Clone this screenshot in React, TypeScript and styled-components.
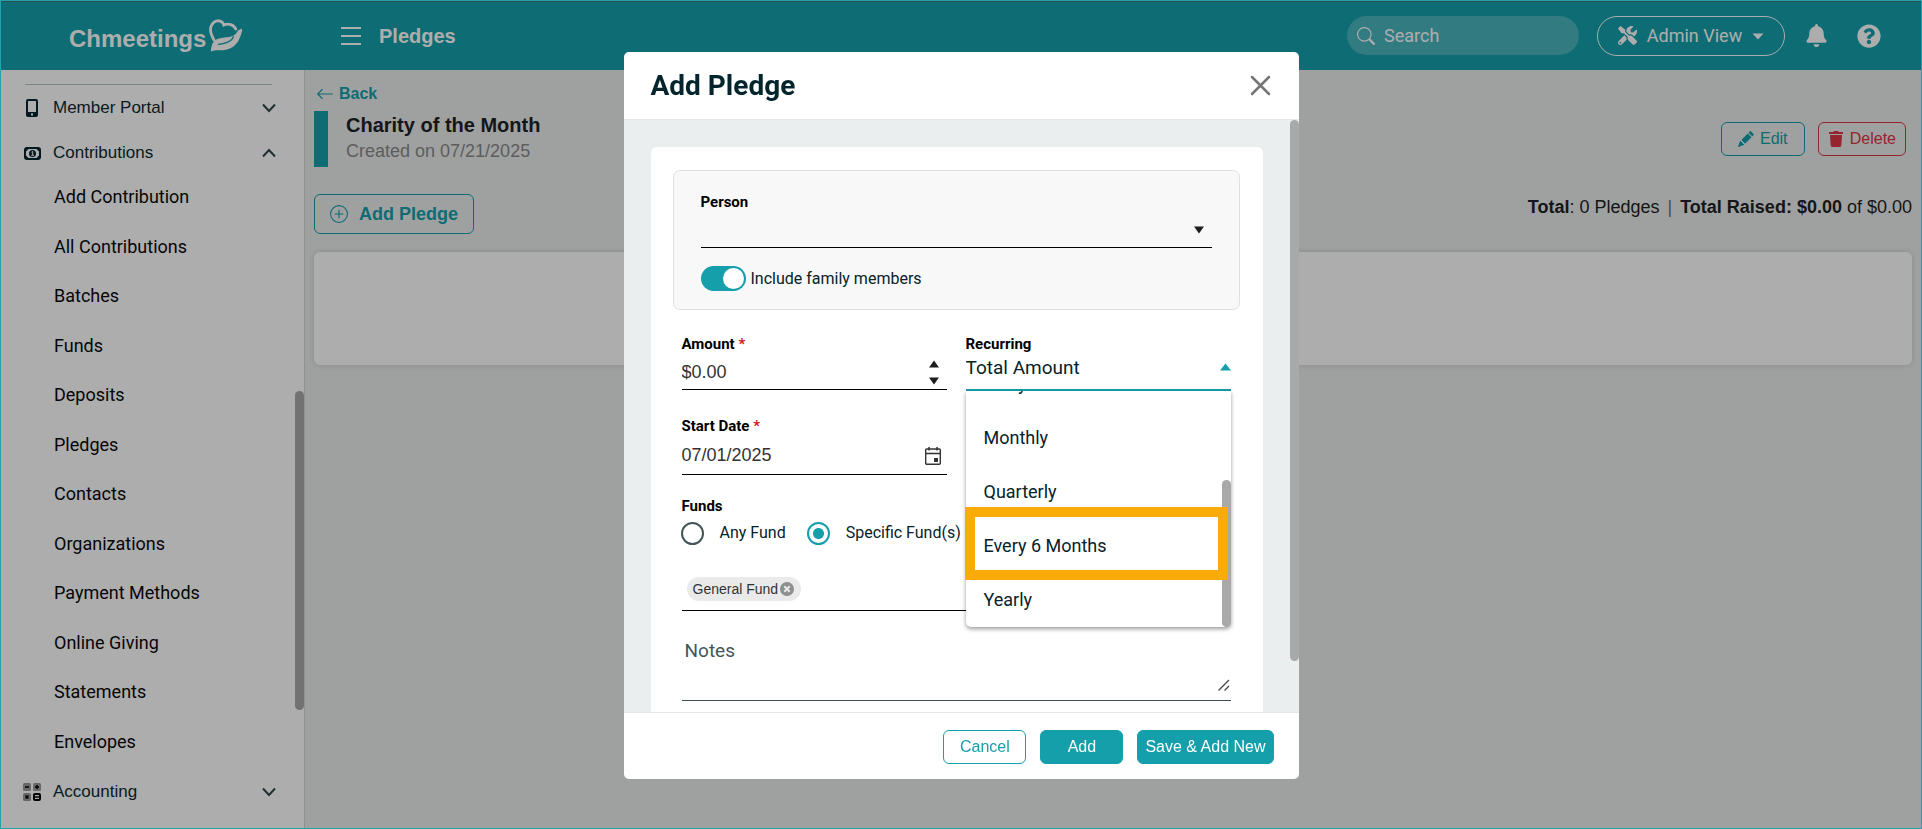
import React from "react";
import styled, { createGlobalStyle, css } from "styled-components";
import { BsArrowLeft, BsPencilFill, BsPlusCircle, BsSearch } from "react-icons/bs";
import { FaBell, FaQuestionCircle, FaTools, FaTrash } from "react-icons/fa";

const teal = "#149fab";
const ink = "#06222a";
const arial = '"Liberation Sans", Arial, sans-serif';
const roboto = 'Roboto, "Liberation Sans", sans-serif';

const GlobalStyle = createGlobalStyle`
  *, *::before, *::after { box-sizing: border-box; }
  html, body { margin: 0; height: 100%; overflow: hidden; }
  body { font-family: ${arial}; color: #1d2226; background: #ebeeed; }
  button, input, select, textarea { font: inherit; color: inherit; }
  a { color: inherit; text-decoration: none; }
`;

/* ---------- Page shell ---------- */

const Shell = styled.div`
  position: relative;
  height: 100vh;
  display: flex;
  flex-direction: column;
  padding: 1px;
`;

const Frame = styled.div`
  position: fixed;
  inset: 0;
  border: 1px solid #1fa3af;
  pointer-events: none;
`;

const TopBar = styled.header`
  flex: none;
  height: 69px;
  display: flex;
  align-items: center;
  background: ${teal};
  border-top: 1px solid #4a7377;
  color: #fff;
  padding: 0 40px 1px 0;
`;

const Brand = styled.a`
  width: 340px;
  padding-left: 68px;
  display: flex;
  align-items: center;
  gap: 3px;
  font-size: 24px;
  font-weight: 700;
  line-height: 32px;
  span { padding-top: 6px; }
`;

const IconButton = styled.button`
  display: flex;
  align-items: center;
  justify-content: center;
  padding: 0;
  border: 0;
  background: none;
  cursor: pointer;
`;

const PageName = styled.h1`
  margin: 0 auto 0 18px;
  font-size: 20px;
  line-height: 24px;
`;

const SearchBox = styled.label`
  width: 232px;
  height: 39px;
  border-radius: 20px;
  background: rgba(255, 255, 255, 0.23);
  display: flex;
  align-items: center;
  gap: 9px;
  padding: 0 10px;
  font-family: ${roboto};
  font-size: 18px;
  input {
    min-width: 0;
    flex: 1;
    border: 0;
    padding: 0;
    background: none;
    outline: none;
  }
  input::placeholder { color: #fff; opacity: 1; }
`;

const ViewButton = styled.button`
  height: 40px;
  width: 188px;
  margin: 0 20px 0 18px;
  padding: 0 0 1px;
  display: flex;
  align-items: center;
  justify-content: center;
  gap: 10px;
  border: 1px solid #fff;
  border-radius: 20px;
  background: none;
  font-family: ${roboto};
  font-size: 18px;
`;

const HelpButton = styled(IconButton)`
  margin-left: 29px;
`;

const Columns = styled.div`
  flex: 1;
  min-height: 0;
  display: flex;
`;

/* ---------- Sidebar ---------- */

const Sidebar = styled.nav`
  position: relative;
  flex: none;
  width: 304px;
  background: #fff;
  border-right: 1px solid #d3d8d9;
  overflow: hidden;
`;

const Rule = styled.hr`
  margin: 14px 32px 1px 24px;
  border: 0;
  border-top: 1px solid #b4c2c5;
`;

const Group = styled.button<{ $gap?: number }>`
  width: 100%;
  height: 44px;
  margin-top: ${(p) => p.$gap ?? 0}px;
  padding: 0 28px 0 21px;
  display: grid;
  grid-template-columns: 20px 1fr 14px;
  column-gap: 11px;
  align-items: center;
  justify-items: start;
  border: 0;
  background: none;
  color: #0a2b31;
  font-size: 17px;
  svg:first-child { justify-self: center; }
`;

const SubList = styled.ul`
  list-style: none;
  margin: -3px 0 0;
  padding: 0;
  height: 594px;
  display: grid;
  grid-auto-rows: 1fr;
`;

const SubLink = styled.a`
  height: 100%;
  padding-left: 53px;
  display: flex;
  align-items: center;
  font-family: ${roboto};
  font-size: 18px;
  color: #0a0a0a;
`;

const Thumb = styled.div<{ $top: number; $height: number }>`
  position: absolute;
  right: 0;
  top: ${(p) => p.$top}px;
  height: ${(p) => p.$height}px;
  width: 9px;
  border-radius: 5px;
  background: #a9a9a9;
`;

/* ---------- Main area ---------- */

const Main = styled.main`
  flex: 1;
  min-width: 0;
  padding: 14px 9px 0;
`;

const Back = styled.a`
  display: flex;
  width: fit-content;
  align-items: center;
  gap: 5px;
  padding-left: 2px;
  color: ${teal};
  font-size: 16px;
  font-weight: 700;
  line-height: 20px;
`;

const CampaignRow = styled.div`
  display: flex;
  margin-top: 7px;
  padding-right: 6px;
`;

const CampaignHead = styled.div`
  flex: 1;
  height: 56px;
  border-left: 14px solid ${teal};
  padding-left: 18px;
  h2 { margin: 0; font-size: 20px; line-height: 28px; }
  p { margin: 0; font-size: 18px; line-height: 24px; color: #8a8a8a; }
`;

const OutlineButton = styled.button<{ $color: string }>`
  height: 34px;
  min-width: 84px;
  padding: 0 9px;
  display: flex;
  align-items: center;
  justify-content: center;
  gap: 6px;
  border: 1px solid ${(p) => p.$color};
  border-radius: 6px;
  background: none;
  color: ${(p) => p.$color};
  font-size: 16px;
`;

const Actions = styled.div`
  display: flex;
  gap: 13px;
  padding-top: 11px;
`;

const ToolRow = styled.div`
  display: flex;
  justify-content: space-between;
  align-items: flex-start;
  margin-top: 27px;
`;

const AddPledgeButton = styled(OutlineButton)`
  height: 40px;
  width: 160px;
  gap: 11px;
  font-size: 18px;
  font-weight: 700;
`;

const Totals = styled.p`
  margin: 3px 0 0;
  font-size: 18px;
  line-height: 20px;
  span { color: #6b7072; margin: 0 8px; }
`;

const EmptyCard = styled.section`
  height: 113px;
  margin-top: 18px;
  border-radius: 6px;
  background: #fff;
  box-shadow: 0 0 6px rgba(0, 0, 0, 0.15);
`;

/* ---------- Dialog ---------- */

const Backdrop = styled.div`
  position: fixed;
  inset: 0;
  padding: 52px 16px 50px;
  display: flex;
  justify-content: center;
  background: rgba(0, 0, 0, 0.32);
`;

const Dialog = styled.section`
  width: 100%;
  max-width: 675px;
  display: flex;
  flex-direction: column;
  border-radius: 5px;
  background: #fff;
  overflow: hidden;
  font-family: ${roboto};
  color: ${ink};
`;

const DialogHead = styled.header`
  flex: none;
  height: 68px;
  padding: 0 28px 0 27px;
  display: flex;
  align-items: center;
  justify-content: space-between;
  border-bottom: 1px solid #e4e8e8;
  h2 { margin: 0; font-size: 28px; line-height: 32px; font-weight: 700; color: #04252b; }
`;

const DialogBody = styled.div`
  position: relative;
  flex: 1;
  min-height: 0;
  overflow: hidden;
  padding: 27px 36px 0 27px;
  background: #ebeeef;
`;

const FormCard = styled.form`
  padding: 23px 23px 24px 22px;
  border-radius: 6px;
  background: #fff;
`;

const PersonBox = styled.div`
  padding: 22px 27px 18px;
  border: 1px solid #dfe0e4;
  border-radius: 7px;
  background: #f8f8f8;
`;

const Label = styled.label`
  display: block;
  font-size: 15px;
  line-height: 18px;
  font-weight: 700;
  color: #000;
  em { color: #d6141c; font-style: normal; }
`;

const Control = styled.div<{ $height: number; $active?: boolean }>`
  height: ${(p) => p.$height}px;
  display: flex;
  align-items: center;
  border-bottom: ${(p) => (p.$active ? `2px solid ${teal}` : "1px solid #000")};
  padding: ${(p) => (p.$active ? "0 0 8px" : "2px 8px 0 0")};
  input, select {
    flex: 1;
    min-width: 0;
    padding: 0;
    border: 0;
    outline: none;
    background: none;
    appearance: none;
  }
  select { font-size: 19px; }
  input { font-family: ${arial}; font-size: 18px; color: #333; }
  svg { flex: none; pointer-events: none; }
`;

const CalendarButton = styled(IconButton)`
  margin-right: -2px;
`;

const SwitchRow = styled.label`
  display: flex;
  align-items: center;
  gap: 5px;
  margin-top: 18px;
  font-size: 16px;
  line-height: 25px;
`;

const Switch = styled.input`
  appearance: none;
  margin: 0;
  width: 45px;
  height: 25px;
  border-radius: 13px;
  background: ${teal};
  display: flex;
  align-items: center;
  justify-content: flex-end;
  padding-right: 2px;
  &::after {
    content: "";
    width: 21px;
    height: 21px;
    border-radius: 50%;
    background: #fff;
  }
`;

const Fields = styled.div`
  padding: 0 9px;
  margin-top: 25px;
`;

const Pair = styled.div`
  display: grid;
  grid-template-columns: 1fr 1fr;
  gap: 26px 19px;
`;

const Field = styled.div`
  position: relative;
`;

const Steppers = styled.div`
  display: flex;
  flex-direction: column;
  gap: 9px;
  button { height: 8px; }
`;

const Menu = styled.div`
  position: absolute;
  z-index: 2;
  top: 100%;
  left: 0;
  right: 0;
  height: 236px;
  background: #fff;
  border-radius: 0 0 5px 5px;
  box-shadow: 0 2px 4px rgba(0, 0, 0, 0.4);
`;

const Options = styled.ul`
  list-style: none;
  margin: 0;
  padding: 0 0 1px;
  height: 100%;
  overflow: hidden;
  display: flex;
  flex-direction: column;
  justify-content: flex-end;
`;

const Option = styled.li`
  flex: none;
  height: 54px;
  padding-left: 18px;
  display: flex;
  align-items: center;
  font-size: 18px;
`;

const Highlight = styled.div`
  position: absolute;
  left: -1px;
  right: 3px;
  bottom: 47px;
  height: 73px;
  border: 10px solid #f9ab09;
`;

const FundSet = styled.fieldset`
  margin: 22px 0 0;
  padding: 0;
  border: 0;
  legend {
    padding: 0;
    font-size: 15px;
    line-height: 18px;
    font-weight: 700;
    color: #000;
  }
`;

const RadioRow = styled.div`
  display: flex;
  gap: 21px;
  margin: 6px 0 0 -1px;
  label {
    display: flex;
    align-items: center;
    gap: 16px;
    font-size: 16px;
    line-height: 24px;
    white-space: nowrap;
  }
`;

const Radio = styled.input`
  appearance: none;
  margin: 0;
  width: 23px;
  height: 23px;
  border: 2px solid #45565a;
  border-radius: 50%;
  ${(p) =>
    p.defaultChecked &&
    css`
      border-color: ${teal};
      background: radial-gradient(circle, ${teal} 5px, transparent 6px);
    `}
`;

const ChipField = styled.div`
  padding: 32px 5px 9px;
  border-bottom: 1px solid #000;
`;

const Chip = styled.span`
  display: inline-flex;
  align-items: center;
  gap: 2px;
  height: 24px;
  padding: 0 7px 0 6px;
  border-radius: 12px;
  background: #eaeaea;
  font-family: ${arial};
  font-size: 14px;
  color: #333;
  vertical-align: top;
`;

const NotesBox = styled.div`
  display: flex;
  align-items: flex-end;
  margin-top: 26px;
  padding-bottom: 8px;
  border-bottom: 1px solid #3f4e51;
  textarea {
    flex: 1;
    height: 55px;
    padding: 2px 3px 0;
    border: 0;
    outline: none;
    resize: none;
    background: none;
    font-size: 19px;
    line-height: 24px;
  }
  textarea::placeholder { color: #44555a; opacity: 1; }
`;

const DialogFoot = styled.footer`
  flex: none;
  height: 67px;
  padding: 2px 25px 0 0;
  display: flex;
  align-items: center;
  justify-content: flex-end;
  gap: 14px;
  border-top: 1px solid #e4e6ea;
`;

const FootButton = styled.button<{ $solid?: boolean }>`
  height: 34px;
  min-width: 83px;
  padding: 0 7px;
  border: 1px solid ${teal};
  border-radius: 6px;
  background: ${(p) => (p.$solid ? teal : "#fff")};
  color: ${(p) => (p.$solid ? "#fff" : teal)};
  font-family: ${arial};
  font-size: 16px;
`;

/* ---------- Drawings ---------- */

const Triangle = ({ up, color = "#1d1d1d", size = 10 }: { up?: boolean; color?: string; size?: number }) => (
  <svg width={size} height="8" viewBox="0 0 10 8" preserveAspectRatio="none" aria-hidden="true">
    <path d={up ? "M0 7.5h10L5 .5z" : "M0 .5h10L5 7.5z"} fill={color} />
  </svg>
);

const Caret = () => (
  <svg width="12" height="10" viewBox="0 0 12 10" aria-hidden="true">
    <path d="M.5 3.500h11L6 9.500z" fill="#fff" />
  </svg>
);

const Chevron = ({ up }: { up?: boolean }) => (
  <svg width="14" height="10" viewBox="0 0 14 10" fill="none" stroke="#33474b" strokeWidth="2" aria-hidden="true">
    <path d={up ? "M1 8.5 7 2l6 6.5" : "M1 1.5 7 8l6-6.5"} />
  </svg>
);

const HeartHand = () => (
  <svg width="34" height="34" viewBox="0 0 34 34" fill="none" aria-hidden="true">
    <path
      d="M5 21C1.500 15 .8 11 2 7.500 3.500 3.500 7 1.500 10 1.800c2.500.3 4.200 1.800 4.800 4.200 4.500-2 10-.5 12 4"
      stroke="#fff"
      strokeWidth="2.800"
      strokeLinecap="round"
    />
    <path
      d="M33 9.500c.8 1.500-1.500 9-4 13-2.500 4-6.500 7.200-11.700 8.200-5 1-11-.2-15.600 1.800C2 29 3 24.500 5 22.300c2-2 4.500-2.800 7.300-3.300 4-.8 8.500-.8 11.700-2.300 2.500-1.200 4-3.200 5-5.200z"
      fill="#fff"
    />
    <path d="M9.500 25.500c5-.8 9.500-1.500 13-4.800 1-1 1.500-2 1.800-3" stroke={teal} strokeWidth="1.300" strokeLinecap="round" />
  </svg>
);

const PhoneIcon = () => (
  <svg width="12" height="18" viewBox="0 0 12 18" aria-hidden="true">
    <path
      fillRule="evenodd"
      fill="#04252b"
      d="M2 0h8a2 2 0 0 1 2 2v14a2 2 0 0 1-2 2H2a2 2 0 0 1-2-2V2a2 2 0 0 1 2-2zm0 2v11h8V2zm3 12.500v2h2v-2z"
    />
  </svg>
);

const MoneyIcon = () => (
  <svg width="17" height="13" viewBox="0 0 17 13" fill="none" aria-hidden="true">
    <rect x="1" y="1" width="15" height="11" rx="2" stroke="#04252b" strokeWidth="2" />
    <path d="M2 2h2.500L2 4.500zM15 2h-2.500L15 4.500zM2 11h2.500L2 8.500zM15 11h-2.500L15 8.500z" fill="#04252b" />
    <circle cx="8.500" cy="6.500" r="3.500" fill="#04252b" />
    <path d="M7.500 5.200l1.200-.7v3.500M7.300 8.300h2.600" stroke="#fff" />
  </svg>
);

const CalcIcon = () => (
  <svg width="18" height="18" viewBox="0 0 18 18" fill="none" aria-hidden="true">
    <g fill="#9a9a9a">
      <rect width="8" height="8" rx="1.500" />
      <rect x="10" width="8" height="8" rx="1.500" />
      <rect y="10" width="8" height="8" rx="1.500" />
    </g>
    <rect x="11" y="11" width="6" height="6" rx="1" stroke="#000" strokeWidth="2" />
    <path d="M11 14h6M2 4h4M12 4h4M14 2v4M2.500 12.500l3 3m0-3l-3 3" stroke="#000" strokeWidth="1.500" />
  </svg>
);

const NextGroupIcon = () => (
  <svg width="16" height="17" viewBox="0 0 16 17" aria-hidden="true">
    <path d="M7 0h2v3h4l3 5v9H0V8l3-5h4z" fill="#04252b" />
  </svg>
);

const MenuIcon = () => (
  <svg width="20" height="18" viewBox="0 0 20 18" stroke="#fff" strokeWidth="2" aria-hidden="true">
    <path d="M0 1h20M0 9h20M0 17h20" />
  </svg>
);

const CloseIcon = () => (
  <svg width="21" height="21" viewBox="0 0 21 21" stroke="#757575" strokeWidth="2.500" strokeLinecap="round" aria-hidden="true">
    <path d="M2 2l17 17M19 2L2 19" />
  </svg>
);

const CalendarIcon = () => (
  <svg width="16" height="18" viewBox="0 0 16 18" fill="none" aria-hidden="true">
    <rect x=".7" y="2" width="14.600" height="15.200" rx="1" stroke="#333" strokeWidth="1.400" />
    <path d="M1 6.500h14M4 0v3.500M12 0v3.500" stroke="#333" strokeWidth="1.500" />
    <rect x="9" y="11" width="4" height="4" fill="#333" />
  </svg>
);

const RemoveIcon = () => (
  <svg width="14" height="14" viewBox="0 0 14 14" aria-hidden="true">
    <circle cx="7" cy="7" r="7" fill="#8f8f8f" />
    <path d="M4.300 4.300l5.400 5.400M9.700 4.300L4.300 9.700" stroke="#eaeaea" strokeWidth="2" />
  </svg>
);

const GripIcon = () => (
  <svg width="14" height="14" viewBox="0 0 14 14" stroke="#444" strokeWidth="1.300" aria-hidden="true">
    <path d="M1.500 12.500 12 2M7.500 12.500 12 8" />
  </svg>
);

/* ---------- App ---------- */

const contributionLinks = [
  "Add Contribution",
  "All Contributions",
  "Batches",
  "Funds",
  "Deposits",
  "Pledges",
  "Contacts",
  "Organizations",
  "Payment Methods",
  "Online Giving",
  "Statements",
  "Envelopes",
];

const recurrences = ["Every 2 Weeks", "Monthly", "Quarterly", "Every 6 Months", "Yearly"];

const AddPledgeDialog = () => (
  <Dialog role="dialog" aria-modal="true" aria-labelledby="dialog-title">
    <DialogHead>
      <h2 id="dialog-title">Add Pledge</h2>
      <IconButton type="button" aria-label="Close">
        <CloseIcon />
      </IconButton>
    </DialogHead>
    <DialogBody>
      <FormCard>
        <PersonBox>
          <Label htmlFor="person">Person</Label>
          <Control $height={37}>
            <select id="person" />
            <Triangle />
          </Control>
          <SwitchRow>
            <Switch type="checkbox" role="switch" defaultChecked />
            Include family members
          </SwitchRow>
        </PersonBox>
        <Fields>
          <Pair>
            <Field>
              <Label htmlFor="amount">
                Amount <em>*</em>
              </Label>
              <Control $height={37}>
                <input id="amount" defaultValue="$0.00" />
                <Steppers>
                  <IconButton type="button" aria-label="Increase">
                    <Triangle up />
                  </IconButton>
                  <IconButton type="button" aria-label="Decrease">
                    <Triangle />
                  </IconButton>
                </Steppers>
              </Control>
            </Field>
            <Field>
              <Label htmlFor="recurring">Recurring</Label>
              <Control $height={38} $active>
                <select id="recurring">
                  <option>Total Amount</option>
                </select>
                <Triangle up color={teal} size={11} />
              </Control>
              <Menu>
                <Options role="listbox" aria-label="Recurring">
                  {recurrences.map((name) => (
                    <Option key={name} role="option">
                      {name}
                    </Option>
                  ))}
                </Options>
                <Thumb $top={89} $height={147} />
                <Highlight />
              </Menu>
            </Field>
            <Field>
              <Label htmlFor="start">
                Start Date <em>*</em>
              </Label>
              <Control $height={40}>
                <input id="start" defaultValue="07/01/2025" />
                <CalendarButton type="button" aria-label="Open calendar">
                  <CalendarIcon />
                </CalendarButton>
              </Control>
            </Field>
          </Pair>
          <FundSet>
            <legend>Funds</legend>
            <RadioRow>
              <label>
                <Radio type="radio" name="fund" />
                Any Fund
              </label>
              <label>
                <Radio type="radio" name="fund" defaultChecked />
                Specific Fund(s)
              </label>
            </RadioRow>
          </FundSet>
          <ChipField>
            <Chip>
              General Fund
              <IconButton type="button" aria-label="Remove General Fund">
                <RemoveIcon />
              </IconButton>
            </Chip>
          </ChipField>
          <NotesBox>
            <textarea aria-label="Notes" placeholder="Notes" />
            <GripIcon />
          </NotesBox>
        </Fields>
      </FormCard>
      <Thumb $top={0} $height={541} />
    </DialogBody>
    <DialogFoot>
      <FootButton type="button">Cancel</FootButton>
      <FootButton type="button" $solid>
        Add
      </FootButton>
      <FootButton type="button" $solid>
        Save &amp; Add New
      </FootButton>
    </DialogFoot>
  </Dialog>
);

export default function App() {
  return (
    <>
      <GlobalStyle />
      <Shell>
        <TopBar>
          <Brand href="#">
            <span>Chmeetings</span>
            <HeartHand />
          </Brand>
          <IconButton type="button" aria-label="Toggle menu">
            <MenuIcon />
          </IconButton>
          <PageName>Pledges</PageName>
          <SearchBox>
            <BsSearch size={18} />
            <input type="text" aria-label="Search" placeholder="Search" />
          </SearchBox>
          <ViewButton type="button">
            <FaTools size={19} />
            Admin View
            <Caret />
          </ViewButton>
          <IconButton type="button" aria-label="Notifications">
            <FaBell size={23} />
          </IconButton>
          <HelpButton type="button" aria-label="Help">
            <FaQuestionCircle size={24} />
          </HelpButton>
        </TopBar>
        <Columns>
          <Sidebar>
            <Rule />
            <Group type="button">
              <PhoneIcon />
              Member Portal
              <Chevron />
            </Group>
            <Group type="button" $gap={1}>
              <MoneyIcon />
              Contributions
              <Chevron up />
            </Group>
            <SubList>
              {contributionLinks.map((name) => (
                <li key={name}>
                  <SubLink href="#">{name}</SubLink>
                </li>
              ))}
            </SubList>
            <Group type="button" $gap={4}>
              <CalcIcon />
              Accounting
              <Chevron />
            </Group>
            <Group type="button" $gap={1} aria-label="More">
              <NextGroupIcon />
            </Group>
            <Thumb $top={321} $height={319} />
          </Sidebar>
          <Main>
            <Back href="#">
              <BsArrowLeft size={18} />
              Back
            </Back>
            <CampaignRow>
              <CampaignHead>
                <h2>Charity of the Month</h2>
                <p>Created on 07/21/2025</p>
              </CampaignHead>
              <Actions>
                <OutlineButton type="button" $color={teal}>
                  <BsPencilFill size={16} />
                  Edit
                </OutlineButton>
                <OutlineButton type="button" $color="#dc3545">
                  <FaTrash size={16} />
                  Delete
                </OutlineButton>
              </Actions>
            </CampaignRow>
            <ToolRow>
              <AddPledgeButton type="button" $color={teal}>
                <BsPlusCircle size={18} />
                Add Pledge
              </AddPledgeButton>
              <Totals>
                <b>Total</b>: 0 Pledges<span>|</span>
                <b>Total Raised:</b> <b>$0.00</b> of $0.00
              </Totals>
            </ToolRow>
            <EmptyCard />
          </Main>
        </Columns>
      </Shell>
      <Backdrop>
        <AddPledgeDialog />
      </Backdrop>
      <Frame />
    </>
  );
}
